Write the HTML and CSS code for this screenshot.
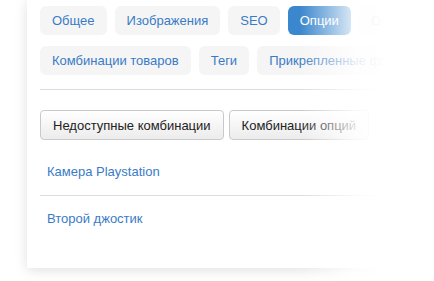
FILE: index.html
```html
<!DOCTYPE html>
<html lang="ru">
<head>
    <meta charset="UTF-8">
    <title>Товар - опции</title>
    <link rel="stylesheet" href="styles.css">
</head>
<body>
    <div class="card">
        <ul class="tabs">
            <li><a href="#">Общее</a></li>
            <li><a href="#">Изображения</a></li>
            <li><a href="#">SEO</a></li>
            <li class="active"><a href="#">Опции</a></li>
            <li><a href="#">Отзывы</a></li>
            <li><a href="#">Комбинации товаров</a></li>
            <li><a href="#">Теги</a></li>
            <li><a href="#">Прикрепленные файлы</a></li>
        </ul>
        <hr class="line">
        <div class="btns">
            <button class="btn">Недоступные комбинации</button>
            <button class="btn">Комбинации опций</button>
        </div>
        <ul class="items">
            <li><a href="#">Камера Playstation</a></li>
            <li><a href="#">Второй джостик</a></li>
        </ul>
    </div>
    <div class="fade"></div>
</body>
</html>
```

FILE: styles.css
```css
* {
    margin: 0;
    padding: 0;
    box-sizing: border-box;
}

html, body {
    height: 100%;
    overflow: hidden;
}

body {
    position: relative;
    background: #fff;
    font-family: "Liberation Sans", Arial, sans-serif;
    font-size: 13px;
    color: #333;
}

.card {
    width: 407px;
    height: 268px;
    margin-left: 27px;
    padding: 6px 13px 0;
    background: #fff;
    box-shadow: 0 2px 12px rgba(0, 0, 0, 0.13);
    overflow: hidden;
}

.tabs {
    list-style: none;
    display: flex;
    flex-wrap: wrap;
    gap: 11px 8px;
    width: 394px;
    height: 69px;
    overflow: hidden;
}
.tabs a {
    display: block;
    height: 29px;
    line-height: 29px;
    padding: 0 12px;
    border-radius: 6px;
    background: #f5f5f5;
    color: #3a7bc6;
    text-decoration: none;
    white-space: nowrap;
}
.tabs .active a {
    background: #3b87cd;
    color: #fff;
}

.line {
    border: 0;
    border-top: 1px solid #dcdcdc;
    margin: 14px 0 0;
}

.btns {
    margin-top: 20px;
    display: flex;
    gap: 5px;
    white-space: nowrap;
    overflow: hidden;
}
.btn {
    flex: none;
    height: 30px;
    padding: 0 12px;
    font-family: inherit;
    font-size: 13px;
    color: #222;
    border: 1px solid #c9c9c9;
    border-radius: 4px;
    background: linear-gradient(#ffffff, #ececec);
}

.items {
    list-style: none;
    margin-top: 10px;
}
.items li {
    padding: 12px 7px 13px;
    line-height: 20px;
}
.items li + li {
    border-top: 1px solid #dcdcdc;
    padding-top: 13px;
}
.items a {
    color: #3a7bc6;
    text-decoration: none;
}

.fade {
    position: absolute;
    top: 0;
    bottom: 0;
    left: 300px;
    right: 0;
    background: linear-gradient(to right, rgba(255, 255, 255, 0) 0, rgba(255, 255, 255, 0.85) 55px, #fff 85px, #fff);
}
```
